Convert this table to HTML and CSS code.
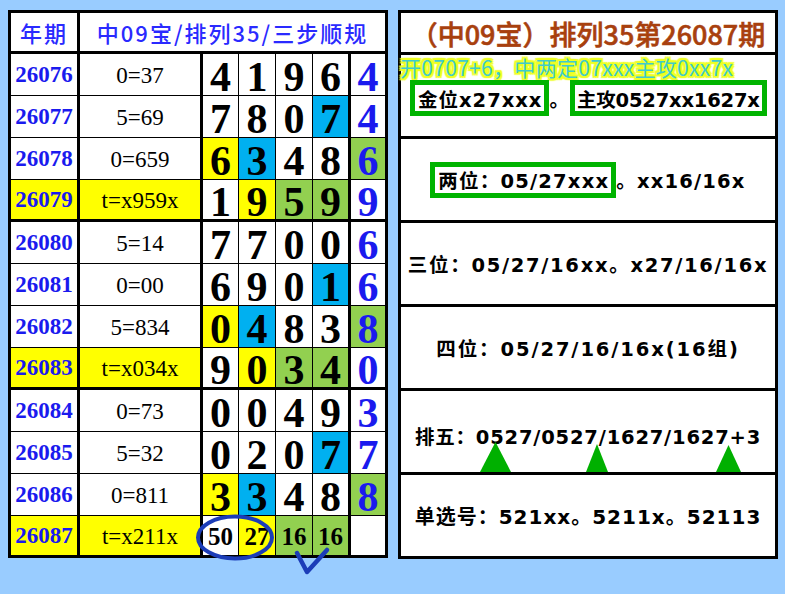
FILE: index.html
```html
<!DOCTYPE html>
<html lang="zh">
<head>
<meta charset="utf-8">
<title>中09宝 排列35</title>
<link rel="stylesheet" href="styles.css">
</head>
<body>
<div class="page">
  <div class="board">
    <div class="head"><div class="h1">年期</div><div class="h2">中09宝/排列35/三步顺规</div></div>
    <div class="row"><div class="per">26076</div><div class="fm">0=37</div><div class="d">4</div><div class="d">1</div><div class="d">9</div><div class="d d4">6</div><div class="d d5">4</div></div>
    <div class="row"><div class="per">26077</div><div class="fm">5=69</div><div class="d">7</div><div class="d">8</div><div class="d">0</div><div class="d d4 b">7</div><div class="d d5">4</div></div>
    <div class="row"><div class="per">26078</div><div class="fm">0=659</div><div class="d y">6</div><div class="d b">3</div><div class="d">4</div><div class="d d4">8</div><div class="d d5 g">6</div></div>
    <div class="row end"><div class="per y">26079</div><div class="fm y">t=x959x</div><div class="d">1</div><div class="d y">9</div><div class="d g">5</div><div class="d d4 g">9</div><div class="d d5">9</div></div>
    <div class="row"><div class="per">26080</div><div class="fm">5=14</div><div class="d">7</div><div class="d">7</div><div class="d">0</div><div class="d d4">0</div><div class="d d5">6</div></div>
    <div class="row"><div class="per">26081</div><div class="fm">0=00</div><div class="d">6</div><div class="d">9</div><div class="d">0</div><div class="d d4 b">1</div><div class="d d5">6</div></div>
    <div class="row"><div class="per">26082</div><div class="fm">5=834</div><div class="d y">0</div><div class="d b">4</div><div class="d">8</div><div class="d d4">3</div><div class="d d5 g">8</div></div>
    <div class="row end"><div class="per y">26083</div><div class="fm y">t=x034x</div><div class="d">9</div><div class="d y">0</div><div class="d g">3</div><div class="d d4 g">4</div><div class="d d5">0</div></div>
    <div class="row"><div class="per">26084</div><div class="fm">0=73</div><div class="d">0</div><div class="d">0</div><div class="d">4</div><div class="d d4">9</div><div class="d d5">3</div></div>
    <div class="row"><div class="per">26085</div><div class="fm">5=32</div><div class="d">0</div><div class="d">2</div><div class="d">0</div><div class="d d4 b">7</div><div class="d d5">7</div></div>
    <div class="row"><div class="per">26086</div><div class="fm">0=811</div><div class="d y">3</div><div class="d b">3</div><div class="d">4</div><div class="d d4">8</div><div class="d d5 g">8</div></div>
    <div class="row last"><div class="per y">26087</div><div class="fm y">t=x211x</div><div class="d sm">50</div><div class="d sm y">27</div><div class="d sm g">16</div><div class="d d4 sm g">16</div><div class="d d5"></div></div>
  </div>

  <div class="panel">
    <div class="title">（中09宝）排列35第26087期</div>
    <div class="sec top">
      <div class="glow">开0707+6，中两定07xxx主攻0xx7x</div>
      <div class="line"><span class="box">金位x27xxx</span>。<span class="box tight">主攻0527xx1627x</span></div>
    </div>
    <div class="sec s3"><span class="box">两位：05/27xxx</span>。xx16/16x</div>
    <div class="sec s4">三位：05/27/16xx。x27/16/16x</div>
    <div class="sec s5">四位：05/27/16/16x(16组)</div>
    <div class="sec five">排五：0527/0527/1627/1627+3</div>
    <div class="sec last">单选号：521xx。5211x。52113</div>
  </div>
</div>

<svg class="overlay" width="785" height="594" viewBox="0 0 785 594">
  <ellipse cx="235" cy="537.5" rx="37" ry="21" fill="none" stroke="#1c3db8" stroke-width="4"/>
  <polyline points="297,553 307,572 327,550" fill="none" stroke="#1c3db8" stroke-width="4.5" stroke-linecap="round" stroke-linejoin="round"/>
  <polygon points="480,472 511,472 495.5,442" fill="#00b000"/>
  <polygon points="586,472 608,472 597,444" fill="#00b000"/>
  <polygon points="716,472 741,472 728.5,445" fill="#00b000"/>
</svg>
</body>
</html>
```

FILE: styles.css
```css
* { box-sizing: border-box; }

body {
  margin: 0;
  background: #99ccff;
  width: 785px;
  height: 594px;
  overflow: hidden;
  position: relative;
}

.page {
  display: flex;
  align-items: flex-start;
  gap: 10px;
  padding: 10px 0 0 8px;
}

.overlay {
  position: absolute;
  left: 0;
  top: 0;
  pointer-events: none;
}

/* ---------- left table ---------- */
.board {
  width: 380px;
  border: 3px solid #000;
  background: #fff;
}

.head {
  display: grid;
  grid-template-columns: 69px 305px;
  height: 41px;
  border-bottom: 3px solid #000;
}

.head div {
  display: flex;
  align-items: center;
  justify-content: center;
  color: #2a2aff;
  font-family: "Noto Sans CJK SC", sans-serif;
  font-weight: 500;
  font-size: 22px;
  letter-spacing: 2px;
}

.head .h1 { border-right: 3px solid #000; }

.row {
  display: grid;
  grid-template-columns: 69px 123px 36px 37px 37px 38px 34px;
  height: 42px;
  border-bottom: 1px solid #000;
}

.row.end { border-bottom-width: 3px; }
.row.last { height: 39px; border-bottom: 0; }

.row > div {
  display: flex;
  align-items: center;
  justify-content: center;
  border-right: 1px solid #000;
}

.row > .per,
.row > .fm,
.row > .d4 { border-right-width: 3px; }

.row > .d5 { border-right: 0; }

.per {
  font-family: "Liberation Serif", serif;
  font-weight: bold;
  font-size: 23px;
  line-height: 1;
  color: #1a1aee;
}

.fm {
  font-family: "Liberation Serif", serif;
  font-size: 23px;
  line-height: 1;
  padding-top: 2px;
  color: #000;
}

.d {
  font-family: "Liberation Serif", serif;
  font-weight: bold;
  font-size: 42px;
  line-height: 34px;
  padding-top: 4px;
  color: #000;
}

.d5 { color: #1a1aee; }

.row > .sm { font-size: 25px; line-height: 26px; padding-top: 3px; }

.y { background: #ffff00; }
.b { background: #00b0f0; }
.g { background: #92d050; }

/* ---------- right panel ---------- */
.panel {
  width: 380px;
  border: 3px solid #000;
  background: #fff;
  font-family: "DejaVu Sans", "Noto Sans CJK SC", sans-serif;
  font-weight: bold;
  color: #000;
}

.title {
  height: 42px;
  border-bottom: 3px solid #000;
  display: flex;
  align-items: center;
  justify-content: center;
  font-family: "Noto Sans CJK SC", sans-serif;
  font-weight: 500;
  font-size: 27px;
  color: #a8400e;
  padding-top: 2px;
  -webkit-text-stroke: 0.6px #a8400e;
}

.sec {
  height: 84px;
  border-bottom: 3px solid #000;
  display: flex;
  align-items: center;
  justify-content: center;
  font-size: 19.5px;
  letter-spacing: 1px;
  white-space: nowrap;
}

.sec.s3 { letter-spacing: 1.2px; }
.sec.s4 { letter-spacing: 1.7px; }
.sec.s5 { letter-spacing: 1.9px; }
.sec.last { height: 81px; border-bottom: 0; font-size: 20px; }

.sec.top {
  flex-direction: column;
  align-items: flex-start;
  justify-content: flex-start;
}

.glow {
  font-family: "Noto Sans CJK SC", sans-serif;
  font-weight: normal;
  font-size: 21px;
  letter-spacing: 0.3px;
  line-height: 24px;
  color: #3fcccc;
  margin-left: -1px;
  text-shadow:
    1px 1px 0 #eeff22, -1px -1px 0 #eeff22, 1px -1px 0 #eeff22, -1px 1px 0 #eeff22,
    0 2px 1px #eeff22, 0 -2px 1px #eeff22, 2px 0 1px #eeff22, -2px 0 1px #eeff22,
    2px 2px 1px #eeff22, -2px -2px 1px #eeff22, 2px -2px 1px #eeff22, -2px 2px 1px #eeff22;
}

.line {
  display: flex;
  align-items: center;
  margin: 1px 0 0 9px;
}

.box {
  display: inline-flex;
  align-items: center;
  height: 36px;
  border: 5px solid #00b400;
  padding: 0 2px 0 3px;
}

.box.tight { letter-spacing: -0.2px; padding: 0 2px; }

.sec.five { padding-top: 8px; font-size: 19.5px; letter-spacing: 0.8px; }
```
